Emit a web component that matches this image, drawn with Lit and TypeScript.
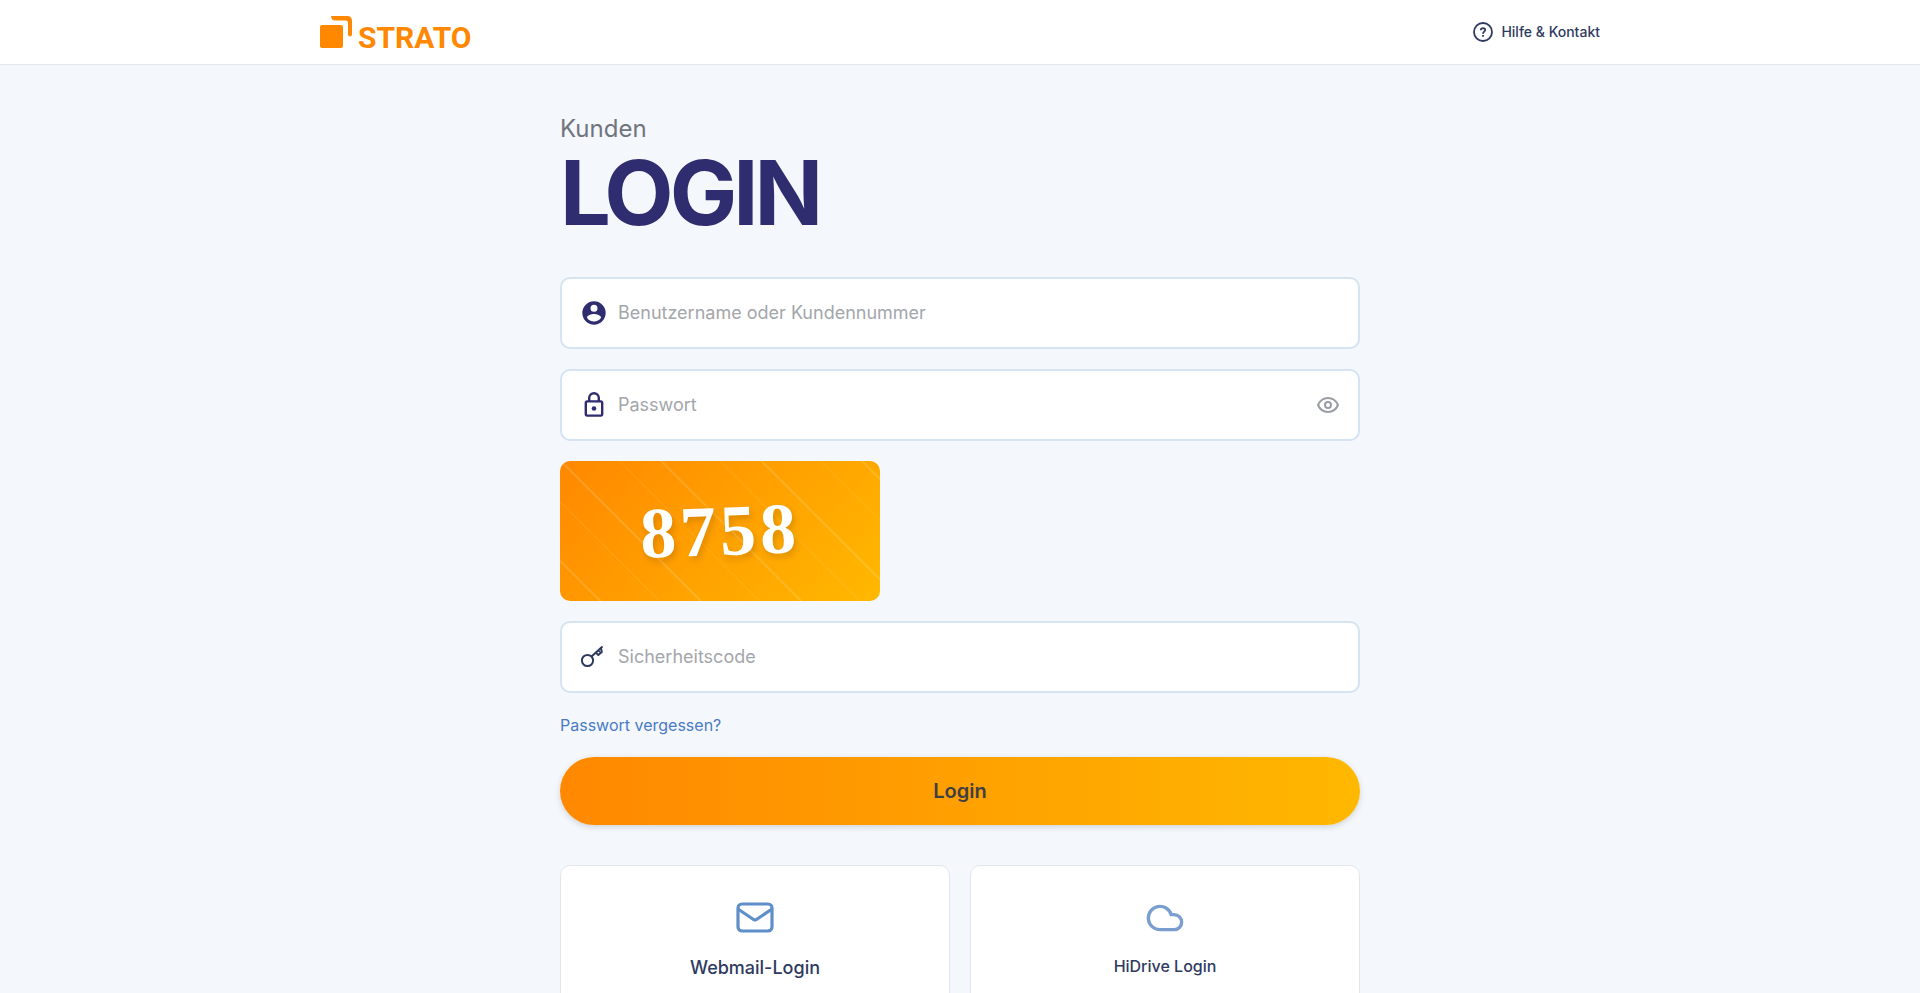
import { LitElement, html, css } from "lit";
import { customElement, state } from "lit/decorators.js";

@customElement("app-root")
export class AppRoot extends LitElement {
  @state() private revealed = false;

  static styles = css`
    :host {
      display: block;
      min-height: 100vh;
      background: #f4f7fc;
      color: #2e3a5f;
      font-family: Inter, "Liberation Sans", sans-serif;
      font-size: 16px;
      line-height: 24px;
    }
    *, *::before, *::after { box-sizing: border-box; }
    a { color: inherit; text-decoration: none; }
    svg { display: block; flex: none; }
    .header { background: #fff; border-bottom: 1px solid #e3e6ec; }
    .bar {
      display: flex;
      align-items: center;
      justify-content: space-between;
      max-width: 1280px;
      height: 64px;
      margin: 0 auto;
    }
    .brand {
      display: flex;
      align-items: flex-end;
      gap: 6px;
      color: #ff8800;
      font: 700 30px/20px Roboto, sans-serif;
    }
    .help { display: flex; align-items: center; gap: 8px; font-size: 14px; font-weight: 500; }
    .page { max-width: 800px; margin: 0 auto; padding: 48px 0; }
    .eyebrow { margin: 0; font-size: 24px; line-height: 32px; color: #70757d; }
    .title {
      margin: 0 0 36px;
      font-size: 90px;
      line-height: 96px;
      font-weight: 700;
      letter-spacing: -4px;
      color: #2f2d70;
    }
    .form { display: flex; flex-direction: column; gap: 20px; }
    .field {
      display: flex;
      align-items: center;
      gap: 10px;
      height: 72px;
      padding: 0 18px;
      background: #fff;
      border: 2px solid #d5e3f3;
      border-radius: 10px;
      color: #2f2d70;
    }
    .field:focus-within { border-color: #4a7fc9; }
    .input {
      flex: 1;
      min-width: 0;
      border: 0;
      outline: 0;
      padding: 0;
      background: none;
      font: inherit;
      font-size: 18px;
      color: #2e3a5f;
    }
    .input::placeholder { color: #a3a6ab; opacity: 1; }
    .reveal { border: 0; padding: 0; background: none; color: #999da3; cursor: pointer; }
    .captcha {
      display: flex;
      align-items: center;
      justify-content: center;
      width: 320px;
      height: 140px;
      border-radius: 10px;
      background:
        repeating-linear-gradient(
          45deg,
          transparent 0 27px,
          rgba(255, 255, 255, 0.14) 28px 29px,
          transparent 30px 69px,
          rgba(255, 255, 255, 0.06) 70px 71px
        ),
        linear-gradient(135deg, #ff8800, #ffb800);
    }
    .code {
      font: 700 72px/80px "Liberation Serif", serif;
      letter-spacing: 4px;
      color: #fff;
      text-shadow: 2px 4px 6px rgba(0, 0, 0, 0.14);
      transform: rotate(-2deg);
    }
    .forgot { align-self: flex-start; color: #4a7bc4; }
    .submit {
      height: 68px;
      border: 0;
      border-radius: 34px;
      background: linear-gradient(90deg, #ff8800, #ffb800);
      box-shadow: 0 2px 6px rgba(0, 0, 0, 0.15);
      font: inherit;
      font-size: 20px;
      font-weight: 600;
      color: #3f3f46;
      cursor: pointer;
    }
    .cards { display: grid; grid-template-columns: 1fr 1fr; gap: 20px; margin-top: 40px; }
    .card {
      display: flex;
      flex-direction: column;
      align-items: center;
      gap: 16px;
      padding: 32px 24px;
      background: #fff;
      border: 1px solid #e2e6ec;
      border-radius: 10px;
      font-weight: 500;
    }
    .card-lead { font-size: 18px; line-height: 28px; }
    .mail { color: #5f8fc9; }
    .cloud { color: #7a9fcf; }
  `;

  render() {
    return html`
      <header class="header">
        <div class="bar">
          <a class="brand" href="#" aria-label="STRATO">
            <svg width="32" height="32" viewBox="0 0 32 32" fill="currentColor" aria-hidden="true">
              <rect x="0" y="9" width="23" height="23" rx="2" />
              <path d="M11 0H27Q32 0 32 5V18.500Q32 20.500 30 20.500Q28 20.500 28 18V7Q28 4.500 25.500 4.500H15Q11.500 4.500 11 0Z" />
            </svg>
            <span>STRATO</span>
          </a>
          <a class="help" href="#">
            <svg width="20" height="20" viewBox="0 0 20 20" fill="none" stroke="currentColor" stroke-width="1.800" aria-hidden="true">
              <circle cx="10" cy="10" r="9" />
              <path d="M7.800 8.200Q7.900 6.200 10 6.200Q12.200 6.300 12.200 8.100C12.200 9.600 10 9.700 10 11.700M10 13V14.800" />
            </svg>
            <span>Hilfe &amp; Kontakt</span>
          </a>
        </div>
      </header>
      <main class="page">
        <p class="eyebrow">Kunden</p>
        <h1 class="title">LOGIN</h1>
        <form class="form" @submit=${(e: Event) => e.preventDefault()}>
          <label class="field">
            <svg width="28" height="28" viewBox="0 0 24 24" fill="currentColor" aria-hidden="true">
              <path d="M12 2a10 10 0 1 0 0 20 10 10 0 0 0 0-20zm0 3a3 3 0 1 1 0 6 3 3 0 0 1 0-6zm0 14.200a7.200 7.200 0 0 1-6-3.220c.03-1.990 4-3.080 6-3.080s5.970 1.090 6 3.080a7.200 7.200 0 0 1-6 3.220z" />
            </svg>
            <input class="input" name="user" autocomplete="username" aria-label="Benutzername oder Kundennummer" placeholder="Benutzername oder Kundennummer" />
          </label>
          <div class="field">
            <svg width="28" height="28" viewBox="0 0 28 28" fill="none" stroke="currentColor" stroke-width="2.400" aria-hidden="true">
              <rect x="5.800" y="10.400" width="16.400" height="14.200" rx="1.500" />
              <path d="M9.200 10.400V7a4.800 4.800 0 0 1 9.600 0v3.400" />
              <circle cx="14" cy="17.500" r="2.300" fill="currentColor" stroke="none" />
            </svg>
            <input class="input" name="password" type=${this.revealed ? "text" : "password"} autocomplete="current-password" aria-label="Passwort" placeholder="Passwort" />
            <button class="reveal" type="button" aria-label="Passwort anzeigen" @click=${() => (this.revealed = !this.revealed)}>
              <svg width="24" height="24" viewBox="0 0 24 24" fill="none" stroke="currentColor" stroke-width="2">
                <path d="M2 12C4 7.500 7.500 5 12 5s8 2.500 10 7c-2 4.500-5.500 7-10 7s-8-2.500-10-7z" />
                <circle cx="12" cy="12" r="3" />
              </svg>
            </button>
          </div>
          <div class="captcha"><span class="code">8758</span></div>
          <label class="field">
            <svg width="28" height="28" viewBox="0 0 28 28" fill="none" stroke="#2e3a5f" stroke-width="2" aria-hidden="true">
              <circle cx="7.500" cy="17.500" r="5.600" />
              <path d="M11.500 13.500L22.500 3.500M15.800 9.600L18.300 12L21.800 9L21 5.200" stroke-linejoin="round" />
              <path d="M18.300 7.500L20.800 9.800" stroke-width="1.400" />
            </svg>
            <input class="input" name="code" autocomplete="off" aria-label="Sicherheitscode" placeholder="Sicherheitscode" />
          </label>
          <a class="forgot" href="#">Passwort vergessen?</a>
          <button class="submit" type="submit">Login</button>
        </form>
        <nav class="cards" aria-label="Weitere Logins">
          <a class="card card-lead" href="#">
            <svg class="mail" width="40" height="40" viewBox="0 0 40 40" fill="none" stroke="currentColor" stroke-width="3.200" stroke-linejoin="round" aria-hidden="true">
              <rect x="3" y="6" width="34" height="27" rx="4" />
              <path d="M3 11L18.500 21.500Q20 22.500 21.500 21.500L37 11" />
            </svg>
            <span>Webmail-Login</span>
          </a>
          <a class="card" href="#">
            <svg class="cloud" width="40" height="40" viewBox="0 0 24 24" fill="none" stroke="currentColor" stroke-width="2" stroke-linejoin="round" aria-hidden="true">
              <path d="M17.500 19H9a7 7 0 1 1 6.710-9h1.790a4.500 4.500 0 1 1 0 9Z" />
            </svg>
            <span>HiDrive Login</span>
          </a>
        </nav>
      </main>
    `;
  }
}
